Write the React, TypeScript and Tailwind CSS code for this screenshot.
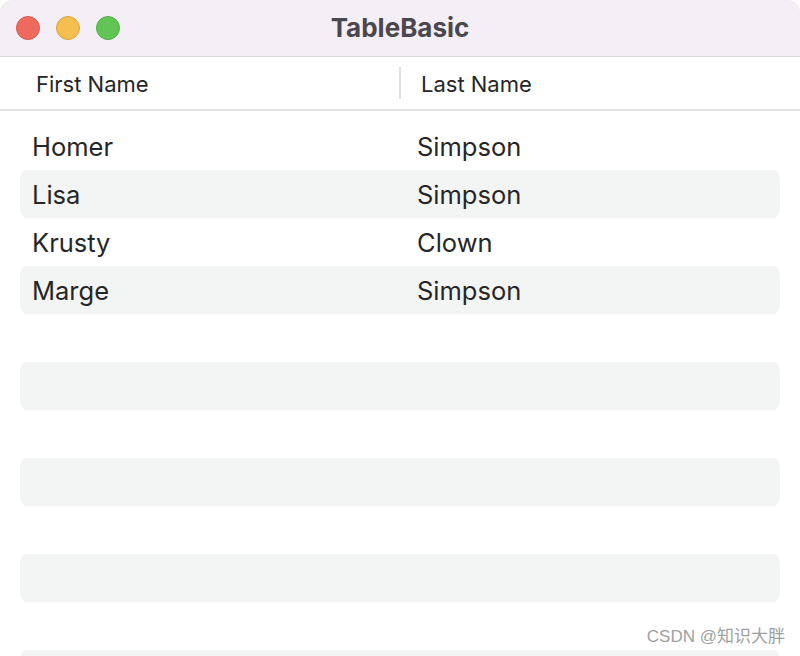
import React from "react";

const rows = [
  ["Homer", "Simpson"],
  ["Lisa", "Simpson"],
  ["Krusty", "Clown"],
  ["Marge", "Simpson"],
  ["", ""],
  ["", ""],
  ["", ""],
  ["", ""],
  ["", ""],
  ["", ""],
  ["", ""],
  ["", ""],
  ["", ""],
];

export default function App() {
  return (
    <div
      className="w-[800px] h-[656px] bg-white overflow-hidden relative"
      style={{ fontFamily: "Inter, 'Noto Sans', 'Noto Sans CJK SC', sans-serif" }}
    >
      <div className="h-[57px] bg-[#f4eff6] rounded-tl-[12px] rounded-tr-[12px] border-b border-[#dcdcdc] flex items-center relative">
        <div className="flex items-center gap-[16px] pl-[16px]">
          <div className="w-[24px] h-[24px] rounded-full bg-[#ee6a5f] border border-[#d65a50]" />
          <div className="w-[24px] h-[24px] rounded-full bg-[#f5bf4f] border border-[#d9a43f]" />
          <div className="w-[24px] h-[24px] rounded-full bg-[#61c554] border border-[#52ab46]" />
        </div>
        <div className="absolute inset-0 flex items-center justify-center text-[26px] font-bold text-[#4b474e] pb-[1px]">
          TableBasic
        </div>
      </div>
      <div className="h-[54px] flex items-center border-b-2 border-[#e3e3e3] text-[22px] text-[#262626]">
        <div className="w-[401px] pl-[36px] h-[32px] flex items-center border-r-2 border-[#e0e0e0] pt-[2px]">
          First Name
        </div>
        <div className="pl-[20px] pt-[2px]">Last Name</div>
      </div>
      <div className="pt-[11px] px-[20px] flex flex-col">
        {rows.map((r, i) => (
          <div
            key={i}
            className={`h-[48px] shrink-0 flex items-center rounded-[8px] text-[25.5px] text-[#262626] pt-[3px] ${
              i % 2 === 1 ? "bg-[#f3f4f4]" : "bg-white"
            }`}
          >
            <div className="w-[397px] pl-[12px]">{r[0]}</div>
            <div>{r[1]}</div>
          </div>
        ))}
      </div>
      <div
        className="absolute right-[15px] top-[625px] text-[17px] text-[#a0a0a0] leading-[24px]"
        style={{ fontFamily: "'Liberation Sans', 'Noto Sans CJK SC', sans-serif" }}
      >
        CSDN @知识大胖
      </div>
    </div>
  );
}
